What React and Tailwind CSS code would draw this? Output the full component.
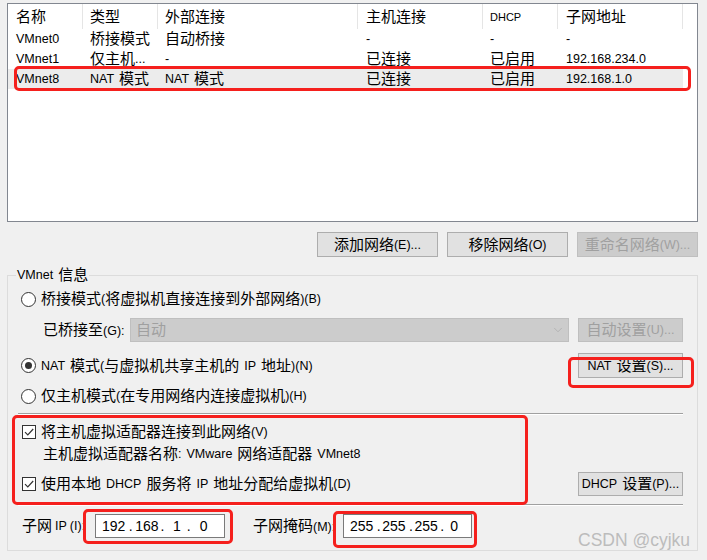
import { ChevronDown } from 'lucide-react';

const CJK = /[\u2e80-\u9fff\uff00-\uffef]/;

// split a label into CJK / latin / space runs so each gets the size it has in the dialog
function T({ s, cjk = 'text-[15px]', lat = 'text-[12.5px]', sp = 'inline-block w-[5px]' }) {
  const parts = s.match(/[\u2e80-\u9fff\uff00-\uffef]+| +|[^\u2e80-\u9fff\uff00-\uffef ]+/g) || [];
  return parts.map((p, i) => {
    if (p.trim() === '') return <span key={i} className={sp} />;
    return (
      <span key={i} className={CJK.test(p) ? cjk : lat}>
        {p}
      </span>
    );
  });
}

const cols = [
  { w: 'w-[75px]', pl: 'pl-[8px]' },
  { w: 'w-[75px]', pl: 'pl-[7px]' },
  { w: 'w-[200px]', pl: 'pl-[7px]' },
  { w: 'w-[125px]', pl: 'pl-[8px]' },
  { w: 'w-[75px]', pl: 'pl-[7px]' },
  { w: 'w-[125px]', pl: 'pl-[8px]' },
];

const header = ['名称', '类型', '外部连接', '主机连接', 'DHCP', '子网地址'];

const rows = [
  ['VMnet0', '桥接模式', '自动桥接', '-', '-', '-'],
  ['VMnet1', '仅主机...', '-', '已连接', '已启用', '192.168.234.0'],
  ['VMnet8', 'NAT 模式', 'NAT 模式', '已连接', '已启用', '192.168.1.0'],
];

function Button({ label, disabled, className = 'w-[121px] h-[25px]' }) {
  return (
    <div
      className={
        disabled
          ? `${className} flex items-center justify-center whitespace-nowrap border border-[#bfbfbf] bg-[#cccccc] text-[#a0a0a0]`
          : `${className} flex items-center justify-center whitespace-nowrap border border-[#adadad] bg-[#e1e1e1] text-black`
      }
    >
      <T s={label} />
    </div>
  );
}

function Radio({ checked }) {
  return (
    <div className="w-[15px] h-[15px] shrink-0 rounded-full border border-[#333333] bg-white flex items-center justify-center">
      {checked && <div className="w-[7px] h-[7px] rounded-full bg-[#333333]" />}
    </div>
  );
}

function Check() {
  return (
    <div className="w-[14px] h-[14px] shrink-0 border border-[#333333] bg-white flex items-center justify-center">
      <svg width="12" height="12" viewBox="0 0 12 12">
        <path d="M2 6.2 L4.8 9 L10.2 3" fill="none" stroke="#333333" strokeWidth="1.2" />
      </svg>
    </div>
  );
}

function IpBox({ parts, className }) {
  // parts: [text, margin class]
  return (
    <div className={`${className} h-[24px] shrink-0 border border-[#7a7a7a] bg-white flex items-center text-[14px] text-black`}>
      {parts.map(([t, m], i) => (
        <span key={i} className={m}>
          {t}
        </span>
      ))}
    </div>
  );
}

export default function App() {
  return (
    <div className="relative w-[707px] h-[560px] overflow-hidden bg-[#f0f0f0] pl-[7px] pr-[9px] pt-[3px] text-black leading-[20px] font-['Liberation_Sans','Noto_Sans_CJK_SC',sans-serif]">
      {/* network list */}
      <div className="h-[219px] border border-[#828790] bg-white">
        <div className="flex h-[25px]">
          {header.map((h, i) => (
            <div key={i} className={`${cols[i].w} ${cols[i].pl} flex items-center border-r border-[#e5e5e5]`}>
              {h === 'DHCP' ? <span className="text-[11px]">DHCP</span> : <T s={h} />}
            </div>
          ))}
        </div>
        {rows.map((r, ri) => (
          <div key={ri} className={ri === 2 ? 'flex h-[20px] w-[675px] bg-[#ececec]' : 'flex h-[20px] w-[675px]'}>
            {r.map((c, ci) => (
              <div key={ci} className={`${cols[ci].w} ${cols[ci].pl} flex items-center whitespace-nowrap`}>
                <T s={c} />
              </div>
            ))}
          </div>
        ))}
      </div>

      <div className="mt-[10px] flex justify-end gap-[9px]">
        <Button label="添加网络(E)..." />
        <Button label="移除网络(O)" />
        <Button label="重命名网络(W)..." disabled />
      </div>

      {/* VMnet info group */}
      <div className="relative mt-[18px] h-[276px] border border-[#dcdcdc] pl-[13px] pr-[14px] pt-[13px]">
        <div className="absolute -top-[11px] left-[8px] flex items-center bg-[#f0f0f0] px-[1px]">
          <T s="VMnet 信息" />
        </div>

        <div className="flex h-[20px] items-center gap-[5px]">
          <Radio />
          <div className="flex items-center whitespace-nowrap">
            <T s="桥接模式(将虚拟机直接连接到外部网络)(B)" />
          </div>
        </div>

        <div className="mt-[9px] flex h-[24px] items-center">
          <div className="ml-[22px] whitespace-nowrap">
            <T s="已桥接至(G):" />
          </div>
          <div className="ml-auto flex h-[24px] w-[439px] items-center border border-[#bfbfbf] bg-[#cccccc] pl-[5px] pr-[3px] text-[#a0a0a0]">
            <T s="自动" />
            <ChevronDown className="ml-auto" size={14} strokeWidth={1} color="#a0a0a0" />
          </div>
          <Button label="自动设置(U)..." disabled className="ml-[9px] w-[105px] h-[24px]" />
        </div>

        <div className="mt-[11px] flex h-[25px] items-center gap-[5px]">
          <Radio checked />
          <div className="flex items-center whitespace-nowrap">
            <T s="NAT 模式(与虚拟机共享主机的 IP 地址)(N)" />
          </div>
          <Button label="NAT 设置(S)..." className="ml-auto w-[105px] h-[25px]" />
        </div>

        <div className="mt-[8px] flex h-[20px] items-center gap-[5px]">
          <Radio />
          <div className="flex items-center whitespace-nowrap">
            <T s="仅主机模式(在专用网络内连接虚拟机)(H)" />
          </div>
        </div>

        <div className="-ml-[3px] mt-[7px] border-t border-b border-t-[#a0a0a0] border-b-white" />

        <div className="mt-[7px] flex h-[20px] items-center gap-[5px] pl-[1px]">
          <Check />
          <div className="flex items-center whitespace-nowrap">
            <T s="将主机虚拟适配器连接到此网络(V)" />
          </div>
        </div>
        <div className="mt-[2px] flex h-[20px] items-center pl-[22px] whitespace-nowrap">
          <T s="主机虚拟适配器名称: VMware 网络适配器 VMnet8" />
        </div>

        <div className="mt-[8px] flex h-[24px] items-center gap-[5px] pl-[1px]">
          <Check />
          <div className="flex items-center whitespace-nowrap">
            <T s="使用本地 DHCP 服务将 IP 地址分配给虚拟机(D)" />
          </div>
          <Button label="DHCP 设置(P)..." className="ml-auto w-[105px] h-[24px]" />
        </div>

        <div className="-ml-[3px] mt-[8px] border-t border-b border-t-[#a0a0a0] border-b-white" />

        <div className="mt-[8px] flex h-[24px] items-center pl-[1px]">
          <div className="flex w-[73px] shrink-0 items-center whitespace-nowrap">
            <T s="子网 IP (I):" sp="inline-block w-[3px]" />
          </div>
          <IpBox
            className="w-[130px]"
            parts={[
              ['192', 'ml-[6px]'],
              ['.', 'ml-[3.5px]'],
              ['168', 'ml-[2.5px]'],
              ['.', 'ml-[2px]'],
              ['1', 'ml-[8.5px]'],
              ['.', 'ml-[6px]'],
              ['0', 'ml-[9px]'],
            ]}
          />
          <div className="ml-[28px] w-[90px] shrink-0 whitespace-nowrap">
            <T s="子网掩码(M):" />
          </div>
          <IpBox
            className="w-[129px]"
            parts={[
              ['255', 'ml-[6px]'],
              ['.', 'ml-[3.5px]'],
              ['255', 'ml-[1.5px]'],
              ['.', 'ml-[3.5px]'],
              ['255', 'ml-[1.5px]'],
              ['.', 'ml-[2.5px]'],
              ['0', 'ml-[6px]'],
            ]}
          />
        </div>
      </div>

      {/* watermark */}
      <div className="absolute left-[578px] top-[529px] text-[17.5px] leading-[22px] text-[#bcbcbc] font-['Liberation_Sans',sans-serif]">
        CSDN @cyjku
      </div>

      {/* red annotation boxes */}
      <div className="absolute left-[14px] top-[66px] w-[677px] h-[25px] rounded-[5px] border-[3px] border-[#f5201d]" />
      <div className="absolute left-[568px] top-[357px] w-[126px] h-[31px] rounded-[5px] border-[3px] border-[#f5201d]" />
      <div className="absolute left-[12px] top-[415px] w-[516px] h-[90px] rounded-[5px] border-[3px] border-[#f5201d]" />
      <div className="absolute left-[83px] top-[509px] w-[150px] h-[35px] rounded-[5px] border-[3px] border-[#f5201d]" />
      <div className="absolute left-[333px] top-[511px] w-[144px] h-[37px] rounded-[5px] border-[3px] border-[#f5201d]" />
    </div>
  );
}
